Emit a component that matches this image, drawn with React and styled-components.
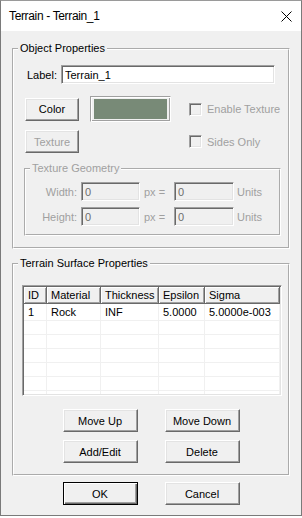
import styled, { createGlobalStyle } from 'styled-components'

const GlobalStyle = createGlobalStyle`
    html, body {
        margin: 0;
        padding: 0;
        background: #ffffff;
    }
    body {
        font-family: "Liberation Sans", Arial, sans-serif;
        font-size: 11px;
        color: #000;
    }
`

const rows = [
    { id: '1', material: 'Rock', thickness: 'INF', epsilon: '5.0000', sigma: '5.0000e-003' },
    {}, {}, {}, {}, {},
]

const columns = [
    { key: 'id', title: 'ID' },
    { key: 'material', title: 'Material' },
    { key: 'thickness', title: 'Thickness' },
    { key: 'epsilon', title: 'Epsilon' },
    { key: 'sigma', title: 'Sigma' },
]

const CloseIcon = () => (
    <svg width="11" height="11" viewBox="0 0 11 11">
        <path d="M0.5 0.5 L10.5 10.5 M10.5 0.5 L0.5 10.5" stroke="#000" strokeWidth="1" fill="none" />
    </svg>
)

const App = () => {
    return (
        <>
            <GlobalStyle />
            <Frame>
                <TitleBar>
                    <TitleText>Terrain - Terrain_1</TitleText>
                    <CloseBox><CloseIcon /></CloseBox>
                </TitleBar>
                <Body>
                    <GroupBox>
                        <Legend>Object Properties</Legend>
                        <LabelRow>
                            <FieldLabel>Label:</FieldLabel>
                            <TextInput defaultValue="Terrain_1" />
                        </LabelRow>
                        <AppearanceGrid>
                            <Button>Color</Button>
                            <Swatch><SwatchFill /></Swatch>
                            <Check disabled>
                                <CheckBox />
                                Enable Texture
                            </Check>
                            <Button disabled>Texture</Button>
                            <span />
                            <Check disabled>
                                <CheckBox />
                                Sides Only
                            </Check>
                        </AppearanceGrid>
                        <GeometryBox>
                            <Legend disabled>Texture Geometry</Legend>
                            <GeometryRow>
                                <GeoLabel>Width:</GeoLabel>
                                <SmallInput>0</SmallInput>
                                <PxLabel>px =</PxLabel>
                                <SmallInput wide>0</SmallInput>
                                <UnitLabel>Units</UnitLabel>
                            </GeometryRow>
                            <GeometryRow>
                                <GeoLabel>Height:</GeoLabel>
                                <SmallInput>0</SmallInput>
                                <PxLabel>px =</PxLabel>
                                <SmallInput wide>0</SmallInput>
                                <UnitLabel>Units</UnitLabel>
                            </GeometryRow>
                        </GeometryBox>
                    </GroupBox>

                    <SurfaceBox>
                        <Legend>Terrain Surface Properties</Legend>
                        <ListView>
                            <ListHeader>
                                {columns.map(c => (
                                    <HeaderCell key={c.key}>{c.title}</HeaderCell>
                                ))}
                            </ListHeader>
                            {rows.map((r, i) => (
                                <ListRow key={i} first={i === 0}>
                                    {columns.map(c => (
                                        <Cell key={c.key}>{r[c.key] || ''}</Cell>
                                    ))}
                                </ListRow>
                            ))}
                            <ListFiller>
                                {columns.map(c => <Cell key={c.key} />)}
                            </ListFiller>
                        </ListView>
                        <ButtonGrid>
                            <Button wide>Move Up</Button>
                            <Button wide>Move Down</Button>
                            <Button wide>Add/Edit</Button>
                            <Button wide>Delete</Button>
                        </ButtonGrid>
                    </SurfaceBox>

                    <DialogButtons>
                        <Button wide primary>OK</Button>
                        <Button wide>Cancel</Button>
                    </DialogButtons>
                </Body>
            </Frame>
        </>
    )
}

const Frame = styled.div`
    width: 302px;
    height: 516px;
    box-sizing: border-box;
    border: 1px solid #7a7a7a;
    border-top-color: #9a9a9a;
    background: #f0f0f0;
    display: flex;
    flex-direction: column;
`

const TitleBar = styled.div`
    height: 30px;
    flex: none;
    background: #ffffff;
    display: flex;
    align-items: center;
    padding-left: 8px;
`

const TitleText = styled.div`
    font-size: 12px;
    letter-spacing: -0.35px;
    color: #000;
    margin-top: -1px;
`

const CloseBox = styled.div`
    margin-left: auto;
    margin-right: 9px;
    width: 11px;
    height: 11px;
    display: flex;
`

const Body = styled.div`
    padding: 0 11px;
    display: flex;
    flex-direction: column;
`

const GroupBox = styled.fieldset`
    margin: 11px 0 0;
    padding: 0;
    border: 2px groove #ffffff;
    min-inline-size: 0;
`

const SurfaceBox = styled(GroupBox)`
    margin-top: 8px;
    padding-bottom: 11px;
`

const Legend = styled.legend`
    padding: 0 2px;
    margin-left: 4px;
    line-height: 13px;
    font-size: 11px;
    color: ${p => (p.disabled ? '#a0a0a0' : '#000')};
`

const LabelRow = styled.div`
    display: flex;
    align-items: center;
    margin: 10px 0 0 13px;
`

const FieldLabel = styled.label`
    width: 34px;
`

const TextInput = styled.input`
    width: 214px;
    height: 19px;
    box-sizing: border-box;
    padding: 0 3px;
    margin: 0;
    font-family: inherit;
    font-size: 11px;
    background: #fff;
    border: 1px solid;
    border-color: #a0a0a0 #ffffff #ffffff #a0a0a0;
    box-shadow: inset 1px 1px 0 #696969, inset -1px -1px 0 #e3e3e3;
    outline: none;
`

const AppearanceGrid = styled.div`
    display: grid;
    grid-template-columns: 54px 81px 1fr;
    grid-template-rows: 26px 23px;
    column-gap: 11px;
    row-gap: 8px;
    align-items: center;
    margin: 12px 0 0 11px;
`

const Button = styled.button`
    width: ${p => (p.wide ? '75px' : '54px')};
    height: 23px;
    box-sizing: border-box;
    margin: 0;
    padding: 0;
    font-family: inherit;
    font-size: 11px;
    color: ${p => (p.disabled ? '#a0a0a0' : '#000')};
    background: #f0f0f0;
    border: 1px solid;
    border-color: ${p => (p.primary ? '#000' : '#ffffff #696969 #696969 #ffffff')};
    box-shadow: ${p => (p.primary
        ? 'inset 1px 1px 0 #ffffff, inset -1px -1px 0 #696969, inset -2px -2px 0 #a0a0a0'
        : 'inset -1px -1px 0 #a0a0a0, inset 1px 1px 0 #e3e3e3')};
`

const Swatch = styled.div`
    width: 81px;
    height: 26px;
    box-sizing: border-box;
    border: 1px solid;
    border-color: #a0a0a0 #ffffff #ffffff #a0a0a0;
    box-shadow: inset 1px 1px 0 #ffffff, inset -1px -1px 0 #a0a0a0;
    padding: 2px 3px;
    display: flex;
`

const SwatchFill = styled.div`
    flex: 1;
    background: #788a77;
`

const Check = styled.label`
    display: flex;
    align-items: center;
    gap: 5px;
    margin-left: 7px;
    color: ${p => (p.disabled ? '#a0a0a0' : '#000')};
`

const CheckBox = styled.span`
    width: 13px;
    height: 13px;
    box-sizing: border-box;
    background: #f0f0f0;
    border: 1px solid;
    border-color: #a0a0a0 #ffffff #ffffff #a0a0a0;
    box-shadow: inset 1px 1px 0 #696969, inset -1px -1px 0 #e3e3e3;
`

const GeometryBox = styled.fieldset`
    margin: 9px 0 11px 10px;
    width: 257px;
    box-sizing: border-box;
    padding: 0 0 8px;
    border: 2px groove #ffffff;
    min-inline-size: 0;
`

const GeometryRow = styled.div`
    display: flex;
    align-items: center;
    margin-top: 7px;
    & + & {
        margin-top: 6px;
    }
    color: #a0a0a0;
`

const GeoLabel = styled.span`
    width: 51px;
    text-align: right;
    margin-right: 4px;
`

const SmallInput = styled.div`
    width: ${p => (p.wide ? '60px' : '59px')};
    height: 19px;
    box-sizing: border-box;
    padding: 0 3px;
    display: flex;
    align-items: center;
    color: #6d6d6d;
    background: #f0f0f0;
    border: 1px solid;
    border-color: #a0a0a0 #ffffff #ffffff #a0a0a0;
    box-shadow: inset 1px 1px 0 #696969, inset -1px -1px 0 #e3e3e3;
`

const PxLabel = styled.span`
    width: 34px;
    box-sizing: border-box;
    padding-left: 4px;
`

const UnitLabel = styled.span`
    margin-left: 3px;
`

const ListView = styled.div`
    margin: 15px 0 0 8px;
    width: 260px;
    height: 111px;
    box-sizing: border-box;
    background: #fff;
    border: 1px solid;
    border-color: #a0a0a0 #ffffff #ffffff #a0a0a0;
    box-shadow: inset 1px 1px 0 #696969, inset -1px -1px 0 #e3e3e3;
    padding: 1px;
    display: flex;
    flex-direction: column;
    overflow: hidden;
`

const gridColumns = '23px 54px 58px 46px 75px'

const ListHeader = styled.div`
    display: grid;
    grid-template-columns: ${gridColumns};
    height: 17px;
    flex: none;
`

const HeaderCell = styled.div`
    box-sizing: border-box;
    padding-left: 4px;
    display: flex;
    align-items: center;
    background: #f0f0f0;
    border-right: 1px solid #696969;
    border-bottom: 1px solid #696969;
    box-shadow: inset 1px 1px 0 #ffffff, inset -1px -1px 0 #a0a0a0;
`

const ListRow = styled.div`
    display: grid;
    grid-template-columns: ${gridColumns};
    height: ${p => (p.first ? '17px' : '14px')};
    flex: none;
    box-sizing: border-box;
    border-bottom: 1px solid #f0f0f0;
`

const ListFiller = styled.div`
    display: grid;
    grid-template-columns: ${gridColumns};
    flex: 1;
`

const Cell = styled.div`
    box-sizing: border-box;
    padding-left: 4px;
    display: flex;
    align-items: center;
    border-right: 1px solid #f0f0f0;
    white-space: nowrap;
`

const ButtonGrid = styled.div`
    display: grid;
    grid-template-columns: 75px 75px;
    column-gap: 27px;
    row-gap: 8px;
    justify-content: center;
    margin-top: 13px;
`

const DialogButtons = styled.div`
    display: flex;
    justify-content: center;
    gap: 27px;
    margin-top: 6px;
`

export default App
